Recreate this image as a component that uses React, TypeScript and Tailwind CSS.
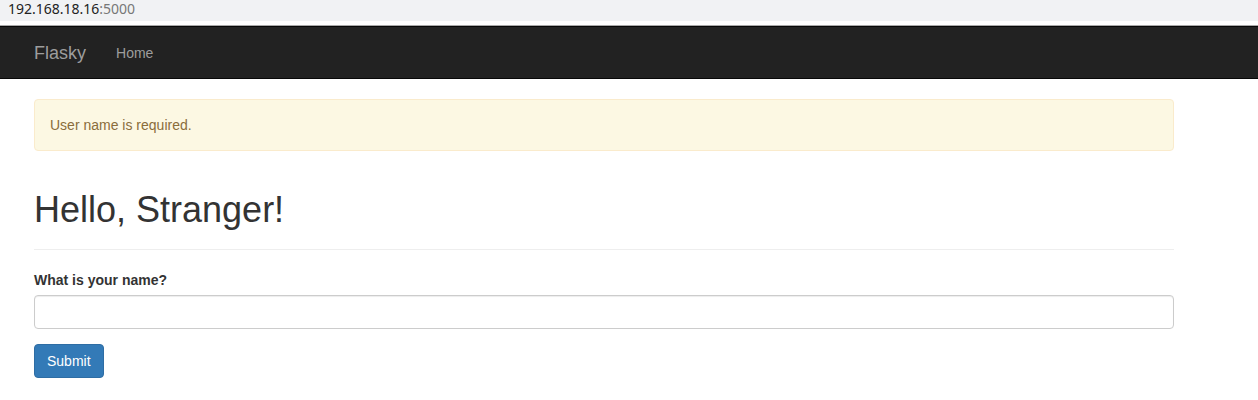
export default function App(): JSX.Element {
    return (
        <div className="min-h-[400px] bg-white font-['Liberation_Sans',Arial,sans-serif] text-[14px] leading-[20px] text-[#333]">
            {/* Address bar */}
            <div className="h-[21px] bg-[#f1f2f4] pl-[8px] text-[14px] leading-[17px] font-['Noto_Sans',sans-serif]">
                <span className="text-[#222]">192.168.18.16</span>
                <span className="text-[#777]">:5000</span>
            </div>
            <div className="h-[4px] bg-white"></div>
            <div className="h-px bg-[#a9a9a9]"></div>

            {/* Navbar */}
            <nav className="h-[53px] bg-[#222] border-y border-[#080808] flex items-center pl-[34px]">
                <span className="text-[18px] text-[#9d9d9d]">Flasky</span>
                <span className="ml-[30px] text-[14px] text-[#9d9d9d]">Home</span>
            </nav>

            {/* Content */}
            <div className="pl-[34px] w-[1174px] pt-[20px]">
                <div className="border border-[#faebcc] bg-[#fcf8e3] text-[#8a6d3b] rounded-[4px] p-[15px]">
                    User name is required.
                </div>

                <div className="mt-[39px] pb-[9px] border-b border-[#eee] mb-[20px]">
                    <h1 className="text-[36px] leading-[39.6px] font-normal mb-[10px]">Hello, Stranger!</h1>
                </div>

                <form className="flex flex-col">
                    <label className="font-bold mb-[5px]">What is your name?</label>
                    <input
                        type="text"
                        className="h-[34px] border border-[#ccc] rounded-[4px] px-[12px] shadow-[inset_0_1px_1px_rgba(0,0,0,0.075)] mb-[15px] outline-none"
                    />
                    <div>
                        <button
                            type="button"
                            className="h-[34px] px-[12px] bg-[#337ab7] border border-[#2e6da4] rounded-[4px] text-white text-[14px]"
                        >
                            Submit
                        </button>
                    </div>
                </form>
            </div>
        </div>
    );
}
